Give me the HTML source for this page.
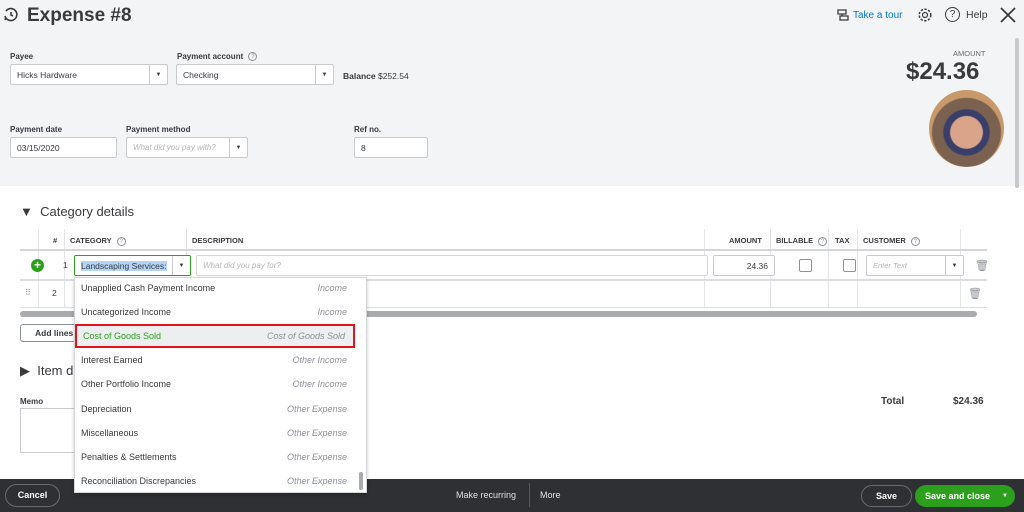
<!DOCTYPE html>
<html><head><style>
*{margin:0;padding:0;box-sizing:border-box}
body{width:1024px;height:512px;overflow:hidden;position:relative;background:#fff;font-family:"Liberation Sans",sans-serif;color:#393a3d}
.a{position:absolute}
.lbl{font-size:8px;font-weight:bold;color:#393a3d}
.inp{position:absolute;background:#fff;border:1px solid #c9cbcf;border-radius:2px;font-size:8.5px;padding-left:6px;display:flex;align-items:center;color:#393a3d}
.dd{position:absolute;right:0;top:0;bottom:0;width:18px;border-left:1px solid #c9cbcf;display:flex;align-items:center;justify-content:center;font-size:6px}
.ph{color:#b4b6b9;font-style:italic}
.th{font-size:7.5px;font-weight:bold;color:#393a3d;position:absolute;top:236px}
.vs{position:absolute;width:1px;background:#e3e4e6}
.q{display:inline-block;width:9px;height:9px;border:1px solid #8d9096;border-radius:50%;font-size:6px;text-align:center;line-height:8px;color:#8d9096;font-weight:normal;vertical-align:middle;margin-left:3px}
.row{position:absolute;left:75px;width:280px;height:24px;font-size:9px;display:flex;justify-content:space-between;align-items:center;padding:0 8px 0 6px;color:#393a3d}
.row i{color:#8d9096}
</style></head><body>
<div class="a" style="left:0;top:0;width:1024px;height:186px;background:#f3f4f5"></div>
<svg class="a" style="left:3px;top:7px" width="16" height="16" viewBox="0 0 16 16"><path d="M3 4a6 6 0 1 1-1 5M2 13l1-3M8 5v3l2 1" fill="none" stroke="#393a3d" stroke-width="1.6"/></svg>
<div class="a" style="left:27px;top:5px;font-size:19px;font-weight:bold;color:#393a3d">Expense #8</div>
<svg class="a" style="left:836px;top:8px" width="14" height="14" viewBox="0 0 14 14"><path d="M2 2h8v4H2zM4 8h8v4H4zM6 6v2" fill="none" stroke="#393a3d" stroke-width="1.3"/></svg>
<div class="a" style="left:853px;top:10px;font-size:10px;color:#0077c5">Take a tour</div>
<svg class="a" style="left:917px;top:7px" width="16" height="16" viewBox="0 0 16 16"><circle cx="8" cy="8" r="2.5" fill="none" stroke="#393a3d" stroke-width="1.2"/><circle cx="8" cy="8" r="5.8" fill="none" stroke="#393a3d" stroke-width="1.5" stroke-dasharray="2.3 1.5"/></svg>
<div class="a" style="left:945px;top:7px;width:15px;height:15px;border:1.5px solid #393a3d;border-radius:50%;font-size:10px;text-align:center;line-height:13px">?</div>
<div class="a" style="left:966px;top:9px;font-size:10.5px">Help</div>
<svg class="a" style="left:1000px;top:7px" width="16" height="16"><path d="M1 1l14 14M15 1L1 15" stroke="#393a3d" stroke-width="1.8"/></svg>
<div class="a" style="left:1015px;top:38px;width:4px;height:150px;background:#c8c9cc;border-radius:2px"></div>

<div class="a lbl" style="left:10px;top:52px">Payee</div>
<div class="inp" style="left:10px;top:64px;width:158px;height:21px">Hicks Hardware<div class="dd">▼</div></div>
<div class="a lbl" style="left:177px;top:52px">Payment account <span class="q">?</span></div>
<div class="inp" style="left:176px;top:64px;width:158px;height:21px">Checking<div class="dd">▼</div></div>
<div class="a" style="left:343px;top:71px;font-size:8.5px"><b>Balance</b> $252.54</div>
<div class="a lbl" style="left:10px;top:125px">Payment date</div>
<div class="inp" style="left:10px;top:137px;width:107px;height:21px">03/15/2020</div>
<div class="a lbl" style="left:126px;top:125px">Payment method</div>
<div class="inp ph" style="left:126px;top:137px;width:122px;height:21px;font-size:8px">What did you pay with?<div class="dd" style="font-style:normal;color:#393a3d">▼</div></div>
<div class="a lbl" style="left:354px;top:125px">Ref no.</div>
<div class="inp" style="left:354px;top:137px;width:74px;height:21px">8</div>
<div class="a" style="left:953px;top:49px;font-size:7.5px;color:#6b6c72">AMOUNT</div>
<div class="a" style="left:906px;top:58px;font-size:24px;font-weight:bold">$24.36</div>
<div class="a" style="left:929px;top:90px;width:75px;height:77px;border-radius:50%;background:radial-gradient(circle at 50% 55%,#d9a48a 0 28%,#3a3f6a 30% 40%,#7a6150 42% 60%,#c89a6a 62%)"></div>

<div class="a" style="left:20px;top:204px;font-size:13px">▼&nbsp; Category details</div>
<div class="vs" style="left:38px;top:229px;height:78px"></div>
<div class="vs" style="left:64px;top:229px;height:78px"></div>
<div class="vs" style="left:186px;top:229px;height:78px"></div>
<div class="vs" style="left:704px;top:229px;height:78px"></div>
<div class="vs" style="left:770px;top:229px;height:78px"></div>
<div class="vs" style="left:828px;top:229px;height:78px"></div>
<div class="vs" style="left:857px;top:229px;height:78px"></div>
<div class="vs" style="left:960px;top:229px;height:78px"></div>
<div class="th" style="left:53px">#</div>
<div class="th" style="left:70px">CATEGORY <span class="q">?</span></div>
<div class="th" style="left:192px">DESCRIPTION</div>
<div class="th" style="left:729px">AMOUNT</div>
<div class="th" style="left:776px">BILLABLE <span class="q">?</span></div>
<div class="th" style="left:835px">TAX</div>
<div class="th" style="left:863px">CUSTOMER <span class="q">?</span></div>
<div class="a" style="left:20px;top:249px;width:967px;height:2px;background:#d4d6d9"></div>
<div class="a" style="left:20px;top:279px;width:967px;height:2px;background:#dcdde0"></div>
<div class="a" style="left:20px;top:307px;width:967px;height:1px;background:#dcdde0"></div>
<div class="a" style="left:20px;top:311px;width:957px;height:6px;background:#a9abae;border-radius:3px"></div>
<div class="a" style="left:31px;top:259px;width:13px;height:13px;border-radius:50%;background:#2ca01c;color:#fff;font-size:12px;font-weight:bold;text-align:center;line-height:13px">+</div>
<div class="a" style="left:63px;top:260px;font-size:8.5px">1</div>
<div class="a" style="left:52px;top:288px;font-size:8.5px">2</div>
<div class="a" style="left:25px;top:288px;font-size:8px;color:#8d9096">⠿</div>
<div class="inp" style="left:74px;top:255px;width:117px;height:21px;border-color:#2ca01c"><span style="background:#b3d4f5">Landscaping Services:</span><div class="dd">▼</div></div>
<div class="inp ph" style="left:196px;top:255px;width:512px;height:21px;font-size:8px;border-color:#d4d6d9">What did you pay for?</div>
<div class="inp" style="left:713px;top:255px;width:62px;height:21px;justify-content:flex-end;padding-right:6px">24.36</div>
<div class="a" style="left:799px;top:259px;width:13px;height:13px;border:1px solid #8d9096;border-radius:2px;background:#fff"></div>
<div class="a" style="left:843px;top:259px;width:13px;height:13px;border:1px solid #8d9096;border-radius:2px;background:#fff"></div>
<div class="inp ph" style="left:866px;top:255px;width:98px;height:21px;font-size:7.5px">Enter Text<div class="dd" style="font-style:normal;color:#393a3d">▼</div></div>
<div class="a" style="left:975px;top:259px;font-size:11px;color:#8d9096">🗑</div>
<div class="a" style="left:968px;top:287px;font-size:11px;color:#8d9096">🗑</div>
<div class="a" style="left:20px;top:324px;width:60px;height:18px;border:1px solid #8d9096;border-radius:3px;font-size:8.5px;font-weight:bold;padding:3px 0 0 14px">Add lines</div>
<div class="a" style="left:20px;top:363px;font-size:13px">▶&nbsp; Item d</div>
<div class="a lbl" style="left:20px;top:397px">Memo</div>
<div class="a" style="left:20px;top:408px;width:60px;height:45px;border:1px solid #c9cbcf;background:#fff"></div>
<div class="a" style="left:881px;top:396px;font-size:10px;font-weight:bold">Total</div>
<div class="a" style="left:953px;top:396px;font-size:10px;font-weight:bold">$24.36</div>

<div class="a" style="left:0;top:479px;width:1024px;height:33px;background:#2f3033"></div>
<div class="a" style="left:5px;top:484px;width:55px;height:23px;border:1px solid #6b6c72;border-radius:12px;color:#fff;font-size:9px;font-weight:bold;text-align:center;line-height:21px">Cancel</div>
<div class="a" style="left:456px;top:490px;font-size:9px;color:#e0e0e0">Make recurring</div>
<div class="a" style="left:529px;top:483px;width:1px;height:24px;background:#555"></div>
<div class="a" style="left:540px;top:490px;font-size:9px;color:#e0e0e0">More</div>
<div class="a" style="left:861px;top:485px;width:51px;height:22px;border:1px solid #6b6c72;border-radius:12px;color:#fff;font-size:9px;font-weight:bold;text-align:center;line-height:20px">Save</div>
<div class="a" style="left:915px;top:485px;width:100px;height:22px;background:#2ca01c;border-radius:12px;color:#fff;font-size:9px;font-weight:bold;line-height:22px;padding-left:10px">Save and close <span style="position:absolute;right:7px;font-size:6px">▼</span></div>

<div class="a" style="left:74px;top:277px;width:293px;height:216px;background:#fff;border:1px solid #d4d6d9;box-shadow:0 2px 4px rgba(0,0,0,.2)"></div>
<div class="a" style="left:359px;top:472px;width:4px;height:18px;background:#a9abae;border-radius:2px"></div>
<div class="row" style="top:276px">Unapplied Cash Payment Income<i>Income</i></div>
<div class="row" style="top:300px">Uncategorized Income<i>Income</i></div>
<div class="row" style="top:324px;background:#eceef0;border:2px solid #e0141e;color:#2ca01c">Cost of Goods Sold<i>Cost of Goods Sold</i></div>
<div class="row" style="top:348px">Interest Earned<i>Other Income</i></div>
<div class="row" style="top:372px">Other Portfolio Income<i>Other Income</i></div>
<div class="row" style="top:397px">Depreciation<i>Other Expense</i></div>
<div class="row" style="top:421px">Miscellaneous<i>Other Expense</i></div>
<div class="row" style="top:445px">Penalties &amp; Settlements<i>Other Expense</i></div>
<div class="row" style="top:469px">Reconciliation Discrepancies<i>Other Expense</i></div>
</body></html>
